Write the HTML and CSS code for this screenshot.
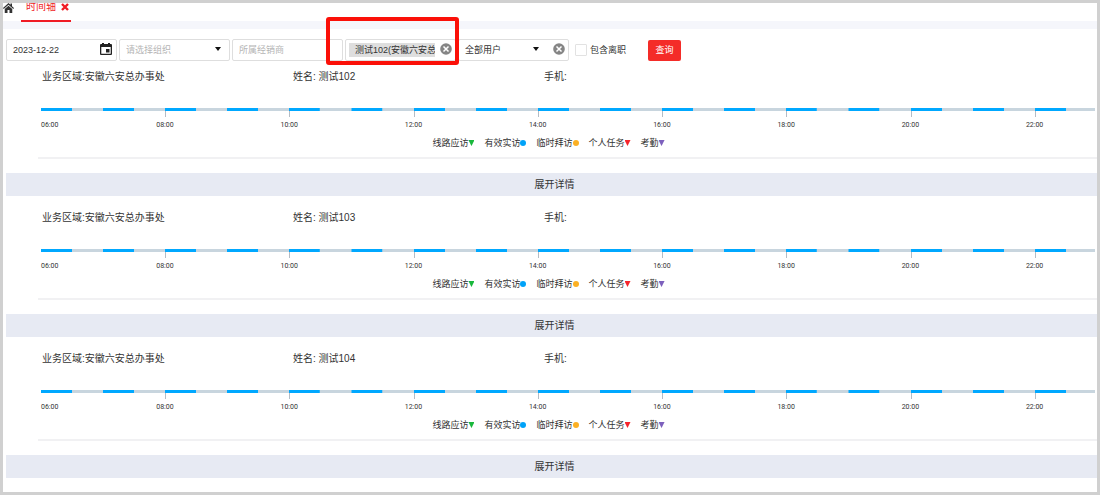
FILE: index.html
```html
<!DOCTYPE html>
<html lang="zh-CN">
<head>
<meta charset="utf-8">
<title>时间轴</title>
<link rel="stylesheet" href="styles.css">
</head>
<body>
<nav class="tabs">
  <a class="home" href="#" aria-label="首页"><svg viewBox="0 0 22 20" width="11" height="10"><path d="M11 0 0 10l1.500 1.800L11 3.500l9.500 8.300L22 10l-4-3.600V1h-3v2.700z"/><path d="M11 5.500 3.500 12v8h5.500v-6h4v6h5.500v-8z"/></svg></a>
  <a class="tab" href="#">时间轴 <svg viewBox="0 0 8 8" width="8" height="8"><path d="M1 1l6 6M7 1 1 7" stroke="currentColor" stroke-width="2.400"/></svg></a>
</nav>
<form class="toolbar">
  <div class="field">
    <input class="control" type="text" value="2023-12-22" aria-label="日期">
    <button class="calendar" type="button" aria-label="选择日期"><svg viewBox="0 0 12 12" width="12" height="12"><path fill-rule="evenodd" d="M1 1h1V0h2v1h4V0h2v1h1q1 0 1 1v9q0 1-1 1H1q-1 0-1-1V2q0-1 1-1zM1.300 4v6.700h9.400V4zM6 6h3.500v3.500H6z"/></svg></button>
  </div>
  <div class="field">
    <select class="control muted" aria-label="组织"><option>请选择组织</option></select>
    <svg class="caret" viewBox="0 0 6 4" width="6" height="4"><path d="M0 0h6L3 4z"/></svg>
  </div>
  <div class="field">
    <input class="control" type="text" placeholder="所属经销商" aria-label="所属经销商">
  </div>
  <div class="field highlighted">
    <div class="control tagbox"><span class="tag">测试102(安徽六安总办事处)</span></div>
    <button class="clear" type="button" aria-label="清除"><svg viewBox="0 0 12 12" width="12" height="12"><circle cx="6" cy="6" r="5.800"/><path d="M3.500 3.500l5 5M8.500 3.500l-5 5" stroke="#fff" stroke-width="1.500"/></svg></button>
  </div>
  <div class="field">
    <select class="control" aria-label="用户"><option>全部用户</option></select>
    <svg class="caret inner" viewBox="0 0 6 4" width="6" height="4"><path d="M0 0h6L3 4z"/></svg>
    <button class="clear" type="button" aria-label="清除"><svg viewBox="0 0 12 12" width="12" height="12"><circle cx="6" cy="6" r="5.800"/><path d="M3.500 3.500l5 5M8.500 3.500l-5 5" stroke="#fff" stroke-width="1.500"/></svg></button>
  </div>
  <label class="check"><input type="checkbox">包含离职</label>
  <button class="query" type="button">查询</button>
</form>
<main>
  <section class="record">
    <div class="info"><span>业务区域:安徽六安总办事处</span><span>姓名: 测试102</span><span>手机:</span></div>
    <ol class="axis"><li>06:00</li><li>08:00</li><li>10:00</li><li>12:00</li><li>14:00</li><li>16:00</li><li>18:00</li><li>20:00</li><li>22:00</li></ol>
    <ul class="legend"><li>线路应访<i class="down green"></i></li><li>有效实访<i class="dot blue"></i></li><li>临时拜访<i class="dot orange"></i></li><li>个人任务<i class="down red"></i></li><li>考勤<i class="down purple"></i></li></ul>
    <button class="expand" type="button">展开详情</button>
  </section>
  <section class="record">
    <div class="info"><span>业务区域:安徽六安总办事处</span><span>姓名: 测试103</span><span>手机:</span></div>
    <ol class="axis"><li>06:00</li><li>08:00</li><li>10:00</li><li>12:00</li><li>14:00</li><li>16:00</li><li>18:00</li><li>20:00</li><li>22:00</li></ol>
    <ul class="legend"><li>线路应访<i class="down green"></i></li><li>有效实访<i class="dot blue"></i></li><li>临时拜访<i class="dot orange"></i></li><li>个人任务<i class="down red"></i></li><li>考勤<i class="down purple"></i></li></ul>
    <button class="expand" type="button">展开详情</button>
  </section>
  <section class="record">
    <div class="info"><span>业务区域:安徽六安总办事处</span><span>姓名: 测试104</span><span>手机:</span></div>
    <ol class="axis"><li>06:00</li><li>08:00</li><li>10:00</li><li>12:00</li><li>14:00</li><li>16:00</li><li>18:00</li><li>20:00</li><li>22:00</li></ol>
    <ul class="legend"><li>线路应访<i class="down green"></i></li><li>有效实访<i class="dot blue"></i></li><li>临时拜访<i class="dot orange"></i></li><li>个人任务<i class="down red"></i></li><li>考勤<i class="down purple"></i></li></ul>
    <button class="expand" type="button">展开详情</button>
  </section>
</main>
</body>
</html>
```
FILE: styles.css
```css
* { box-sizing: border-box; }
body {
  margin: 0;
  min-height: 100vh;
  border: 3px solid #d0d0d0;
  background: #fff;
  color: #333;
  font: 10px/20px "Liberation Sans", "Noto Sans CJK SC", sans-serif;
}
button, input, select { margin: 0; font: inherit; color: inherit; }
button { padding: 0; border: 0; background: none; cursor: pointer; }
ul, ol { margin: 0; padding: 0; list-style: none; }
svg { display: block; }

.tabs {
  display: flex;
  gap: 7px;
  height: 26px;
  border-bottom: 8px solid #f5f6fb;
}
.home { color: #333; fill: currentColor; }
.tab {
  display: flex;
  gap: 5px;
  height: 19px;
  padding: 0 2px 0 5px;
  border-bottom: 2px solid #f01c24;
  color: #f01c24;
  line-height: 8px;
  text-decoration: none;
}

.toolbar {
  display: flex;
  align-items: center;
  gap: 2px;
  padding: 10px 3px 0;
  font-size: 9px;
}
.field { position: relative; width: 111px; }
.control {
  display: block;
  width: 100%;
  height: 22px;
  padding: 0 6px;
  border: 1px solid #dedede;
  border-radius: 2px;
  background: #fff;
  outline: 0;
  appearance: none;
}
.control::placeholder, .muted { color: #b5b5b5; }
.calendar { position: absolute; top: 4px; right: 5px; color: #222; fill: currentColor; }
.caret { position: absolute; top: 8px; right: 9px; fill: #111; pointer-events: none; }
.caret.inner { right: 30px; }
.clear { position: absolute; top: 4px; right: 4px; fill: #858585; }
.tagbox { padding: 3px; }
.tag {
  display: block;
  width: 86px;
  padding-left: 6px;
  overflow: hidden;
  background: #dedede;
  line-height: 14px;
  white-space: nowrap;
}
.highlighted::after {
  content: "";
  position: absolute;
  inset: -22px -3px -4px -19px;
  z-index: 1;
  border: 4px solid #fb1008;
  border-radius: 3px;
  pointer-events: none;
}
.check { display: flex; align-items: center; gap: 3px; margin: 0 20px 0 4px; }
.check input {
  width: 12px;
  height: 12px;
  border: 1px solid #e2e2e2;
  border-radius: 1px;
  appearance: none;
}
.query {
  width: 33px;
  height: 21px;
  border-radius: 2px;
  background: #f42c28;
  color: #fff;
}

main { padding: 6px 0 14px 3px; }
.record + .record { margin-top: 12px; }
.info {
  display: grid;
  grid-template-columns: 251fr 251fr 553fr;
  padding-left: 36px;
}
.axis {
  display: flex;
  margin: 21px 2px 0 35px;
  color: #333;
  font: 7px/10px Roboto, "Liberation Sans", sans-serif;
}
.axis li {
  flex: 124 0 0;
  height: 21px;
  padding-top: 12px;
  background:
    linear-gradient(#b4bcc5, #b4bcc5) 0 3px / 1px 6px no-repeat,
    linear-gradient(90deg, #00a8ff 50%, #c8d5de 50%) 0 0 / 50% 3px repeat-x;
  text-indent: -9px;
}
.axis li:first-child {
  background: linear-gradient(90deg, #00a8ff 50%, #c8d5de 50%) 0 0 / 50% 3px repeat-x;
  text-indent: 0;
}
.axis li:last-child {
  flex-grow: 60;
  background:
    linear-gradient(#b4bcc5, #b4bcc5) 0 3px / 1px 6px no-repeat,
    linear-gradient(90deg, #00a8ff 52%, #c8d5de 52%) 0 0 / 100% 3px no-repeat;
}
.legend {
  display: flex;
  justify-content: center;
  gap: 10px;
  margin-left: 32px;
  padding: 7px 38px 7px 0;
  border-bottom: 2px solid #f1f1f3;
  font-size: 9px;
  line-height: 14px;
}
.legend li { display: flex; align-items: center; }
.legend i { width: 6px; height: 6px; }
.dot { border-radius: 50%; background: currentColor; }
.down { background: currentColor; clip-path: polygon(0 0, 100% 0, 50% 100%); }
.green { color: #19b83c; }
.blue { color: #00a2f8; }
.orange { color: #fbb024; }
.red { color: #f5252b; }
.purple { color: #7d60bd; }
.expand {
  display: block;
  width: 100%;
  height: 23px;
  margin-top: 14px;
  padding-left: 6px;
  background: #e7eaf3;
}
```
